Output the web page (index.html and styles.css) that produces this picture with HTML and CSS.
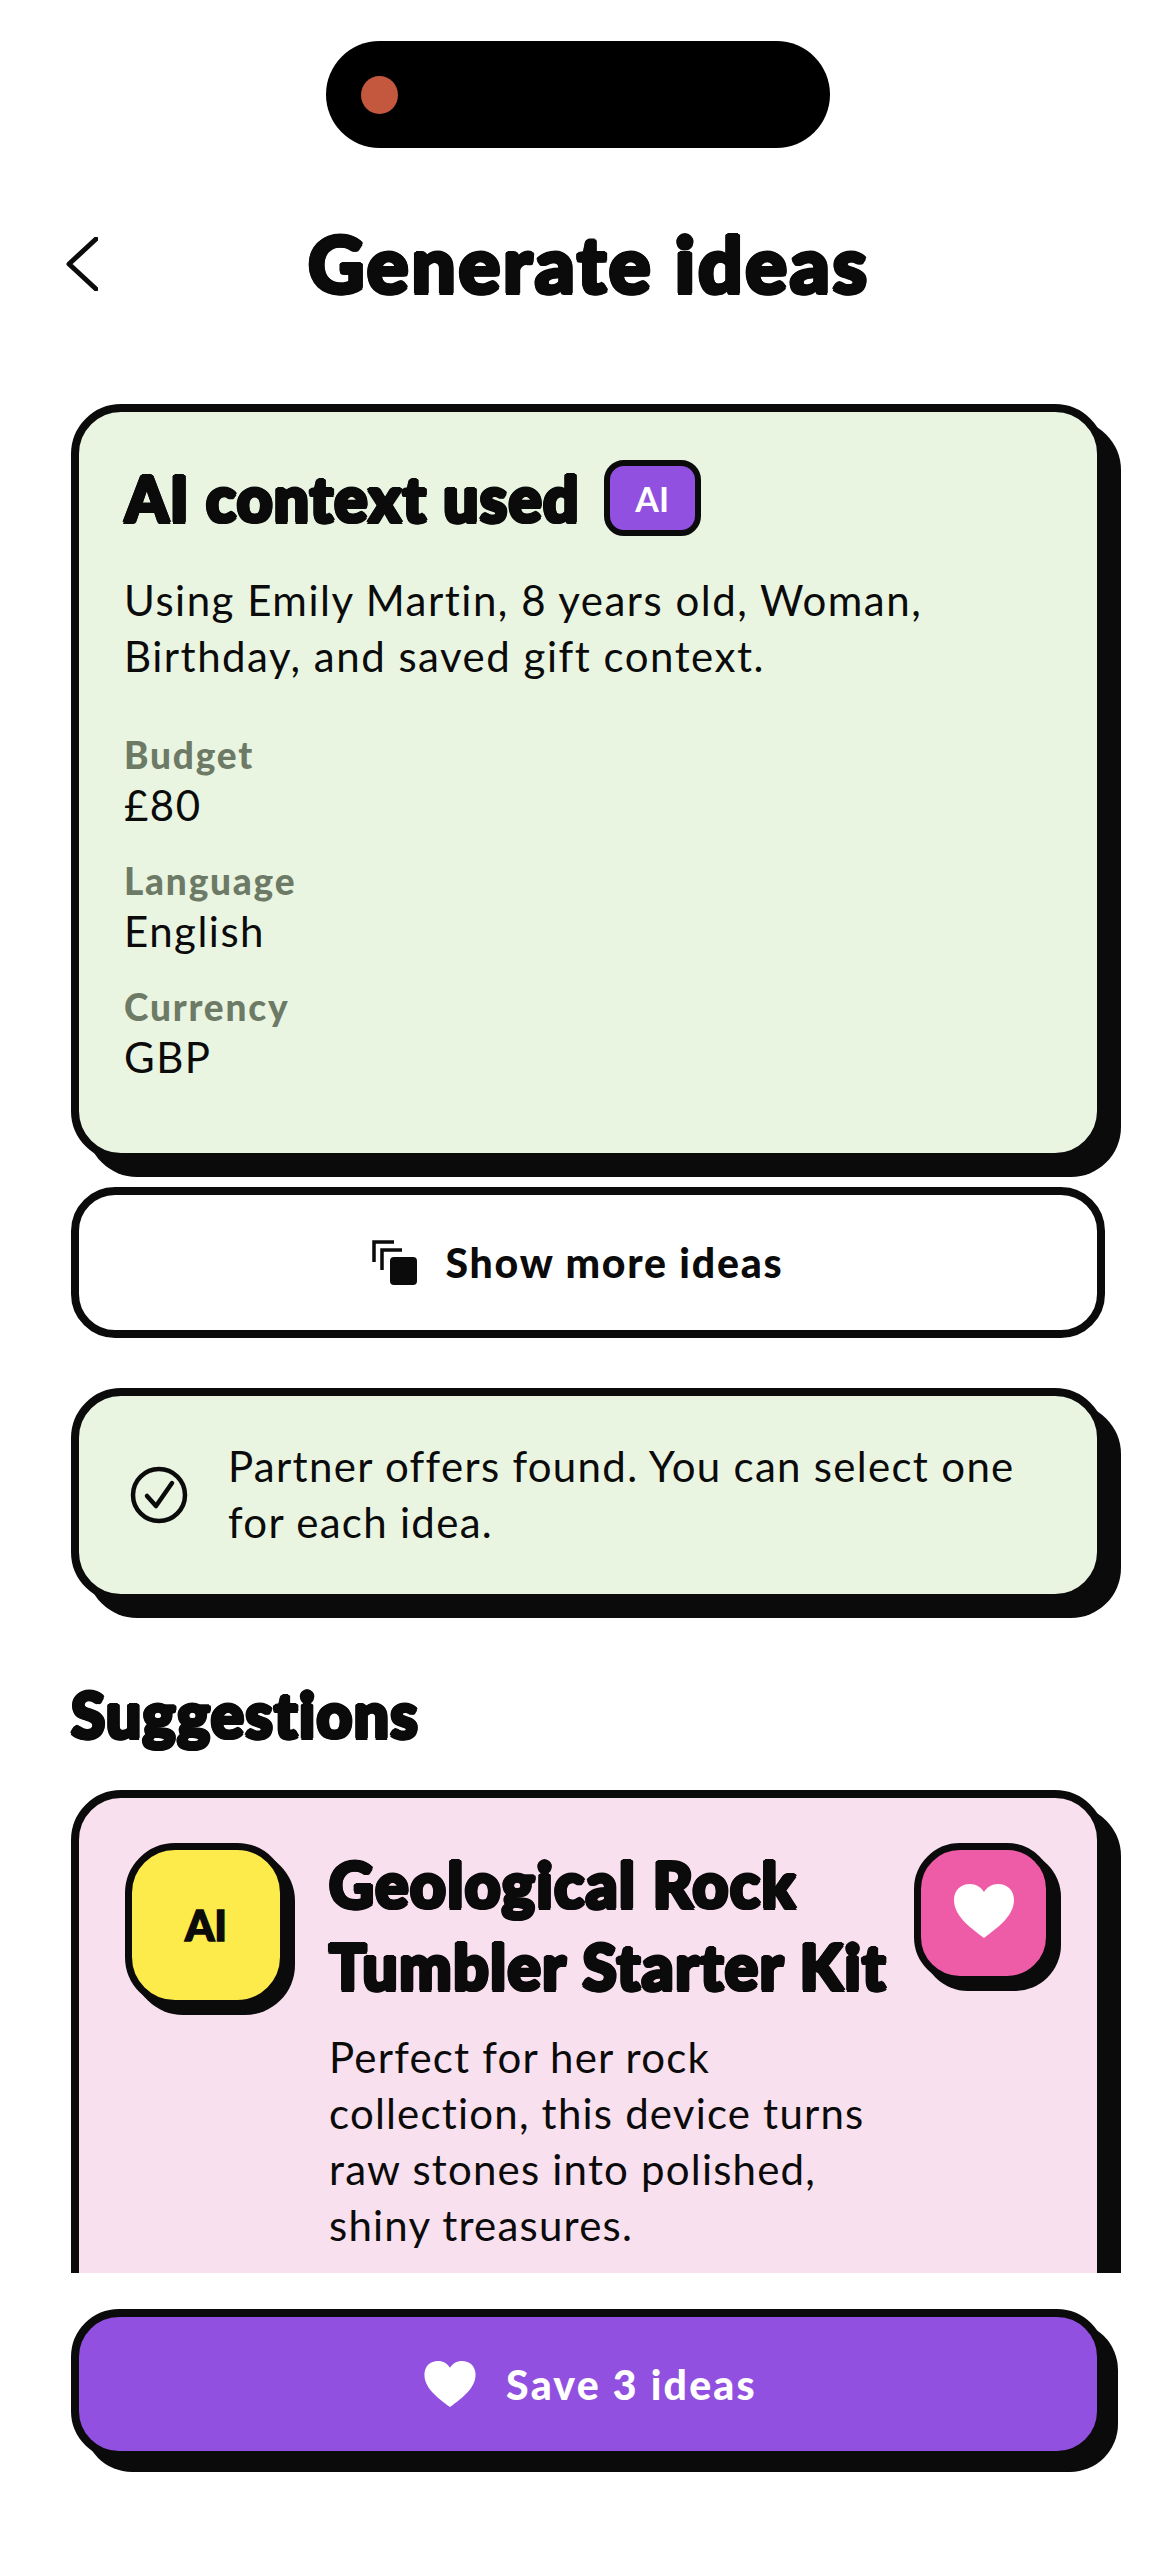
FILE: index.html
```html
<!DOCTYPE html>
<html lang="en">
<head>
<meta charset="utf-8">
<title>Generate ideas</title>
<link rel="stylesheet" href="styles.css">
</head>
<body>
<div class="screen">
  <div class="island"><span class="lens"></span></div>
  <header class="topbar">
    <svg class="back" viewBox="0 0 32 54" aria-hidden="true"><path d="M30 2 3 27l27 25"/></svg>
    <h1 class="page-title display">Generate ideas</h1>
  </header>
  <main class="scroll">
    <section class="card card-green context">
      <div class="context-head">
        <h2 class="card-title display">AI context used</h2>
        <span class="ai-badge">AI</span>
      </div>
      <p class="body-text">Using Emily Martin, 8 years old, Woman, Birthday, and saved gift context.</p>
      <dl class="facts">
        <div class="fact"><dt>Budget</dt><dd>£80</dd></div>
        <div class="fact"><dt>Language</dt><dd>English</dd></div>
        <div class="fact"><dt>Currency</dt><dd>GBP</dd></div>
      </dl>
    </section>
    <button class="more-btn">
      <svg class="more-icon" viewBox="0 0 45 45" aria-hidden="true">
        <path class="more-lines" d="M2 22V2h20M10 30V10h20"/>
        <rect x="18" y="17" width="27" height="28" rx="4"/>
      </svg>
      <span>Show more ideas</span>
    </button>
    <section class="card card-green notice">
      <svg class="check" viewBox="0 0 58 58" aria-hidden="true">
        <circle cx="29" cy="29" r="26"/>
        <path d="M17 30l9 10 16-23"/>
      </svg>
      <p class="body-text">Partner offers found. You can select one for each idea.</p>
    </section>
    <h2 class="section-title display">Suggestions</h2>
    <article class="card card-pink idea">
      <div class="idea-avatar">AI</div>
      <div class="idea-main">
        <h3 class="idea-title display">Geological Rock Tumbler Starter Kit</h3>
        <p class="body-text">Perfect for her rock collection, this device turns raw stones into polished, shiny treasures.</p>
      </div>
      <button class="fav" aria-label="Favourite">
        <svg class="heart-sm" viewBox="0 0 60 54" aria-hidden="true"><path d="M30 54C14 42 0 31 0 16 0 6 7 0 16 0c6 0 11 3 14 8 3-5 8-8 14-8 9 0 16 6 16 16 0 15-14 26-30 38z"/></svg>
      </button>
    </article>
  </main>
  <footer class="footer">
    <button class="save-btn">
      <svg class="heart-lg" viewBox="0 0 60 54" aria-hidden="true"><path d="M30 54C14 42 0 31 0 16 0 6 7 0 16 0c6 0 11 3 14 8 3-5 8-8 14-8 9 0 16 6 16 16 0 15-14 26-30 38z"/></svg>
      <span>Save 3 ideas</span>
    </button>
  </footer>
</div>
</body>
</html>
```

FILE: styles.css
```css
* { box-sizing: border-box; margin: 0; padding: 0; }
html, body { background: #fff; }
body { width: 1176px; height: 2560px; overflow: hidden; font-family: "Lato", "Noto Sans", sans-serif; color: #0b0b0b; }
.screen { width: 1176px; height: 2560px; display: flex; flex-direction: column; }

.display { font-weight: 900; white-space: nowrap; text-shadow: 2px 0 0 #0b0b0b, -2px 0 0 #0b0b0b, 0 2px 0 #0b0b0b, 0 -2px 0 #0b0b0b, 1.5px 1.5px 0 #0b0b0b, -1.5px 1.5px 0 #0b0b0b, 1.5px -1.5px 0 #0b0b0b, -1.5px -1.5px 0 #0b0b0b; }

.island { width: 504px; height: 107px; margin: 41px 0 0 326px; background: #000; border-radius: 54px; display: flex; align-items: center; padding-left: 35px; flex: none; }
.lens { width: 37px; height: 38px; border-radius: 50%; background: #c4583f; }

.topbar { display: flex; align-items: flex-start; height: 256px; padding: 78px 0 0 66px; flex: none; }
.back { width: 32px; height: 54px; margin-top: 11px; fill: none; stroke: #0b0b0b; stroke-width: 5; stroke-linecap: round; stroke-linejoin: round; flex: none; }
.page-title { font-size: 78px; line-height: 74px; margin-left: 210px; letter-spacing: 2.8px; }

.scroll { height: 1869px; flex: none; overflow: hidden; padding: 0 71px; display: flex; flex-direction: column; align-items: stretch; }

.card { border: 8px solid #0b0b0b; border-radius: 50px; box-shadow: 16px 16px 0 #0b0b0b; flex: none; }
.card-green { background: #e9f5e1; }
.card-pink { background: #f9e0ee; }

.context { padding: 46px 46px 0; height: 757px; }
.context-head { display: flex; align-items: center; gap: 24px; height: 76px; margin-top: 2px; }
.card-title { font-size: 62px; line-height: 1; letter-spacing: 1.3px; }
.ai-badge { width: 97px; height: 76px; border: 6px solid #0b0b0b; border-radius: 20px; background: #9150e0; color: #fff; font-size: 34px; font-weight: 700; display: flex; align-items: center; justify-content: center; }
.body-text { font-size: 42px; line-height: 56px; letter-spacing: 1.5px; font-weight: 400; margin-left: -1px; }
.context .body-text { margin-top: 36px; }

.facts { margin-top: 46px; margin-left: -1px; display: flex; flex-direction: column; gap: 25px; }
.fact dt { font-size: 37px; line-height: 50px; font-weight: 900; color: #6d7a66; letter-spacing: 1.8px; }
.fact dd { font-size: 42px; line-height: 51px; letter-spacing: 1.5px; }

.more-btn { margin-top: 26px; height: 151px; flex: none; background: #fff; border: 8px solid #0b0b0b; border-radius: 44px; display: flex; align-items: center; justify-content: center; gap: 28px; padding-right: 20px; font: 900 41px/1 "Lato", sans-serif; letter-spacing: 1.8px; color: #0b0b0b; }
.more-icon { width: 45px; height: 45px; flex: none; }
.more-icon rect { fill: #0b0b0b; }
.more-lines { fill: none; stroke: #0b0b0b; stroke-width: 3.5; }

.notice { margin-top: 50px; height: 214px; display: flex; align-items: center; padding: 0 60px 0 51px; gap: 41px; }
.notice .body-text { letter-spacing: 1.3px; padding-bottom: 3px; }
.check { width: 58px; height: 58px; flex: none; fill: none; stroke: #0b0b0b; stroke-width: 4.5; stroke-linecap: round; stroke-linejoin: round; }

.section-title { margin-top: 72px; margin-bottom: 36px; font-size: 62px; line-height: 80px; letter-spacing: 1.4px; }

.idea { height: 700px; display: flex; align-items: flex-start; padding: 45px 0 0 46px; }
.idea-avatar { width: 162px; height: 164px; border: 7px solid #0b0b0b; border-radius: 50px; background: #fdea4b; box-shadow: 8px 8px 0 #0b0b0b; flex: none; display: flex; align-items: center; justify-content: center; font-size: 42px; font-weight: 900; -webkit-text-stroke: 1.4px #0b0b0b; }
.idea-main { width: 578px; margin-left: 42px; flex: none; }
.idea-title { font-size: 62px; line-height: 82px; letter-spacing: 1.6px; white-space: normal; }
.idea .body-text { margin-top: 22px; margin-left: 0; width: 560px; letter-spacing: 1.2px; }
.fav { width: 139px; height: 140px; margin-left: 7px; padding-bottom: 4px; flex: none; background: #ee5ba6; border: 7px solid #0b0b0b; border-radius: 46px; box-shadow: 8px 8px 0 #0b0b0b; display: flex; align-items: center; justify-content: center; }
.heart-sm { width: 60px; height: 54px; fill: #fff; }

.footer { padding: 36px 71px 0; flex: none; }
.save-btn { width: 1034px; height: 150px; padding-left: 5px; background: #9150e0; border: 8px solid #0b0b0b; border-radius: 48px; box-shadow: 13px 13px 0 #0b0b0b; display: flex; align-items: center; justify-content: center; gap: 30px; color: #fff; font: 900 41px/1 "Lato", sans-serif; letter-spacing: 2.2px; }
.heart-lg { width: 52px; height: 46px; fill: #fff; }
```
